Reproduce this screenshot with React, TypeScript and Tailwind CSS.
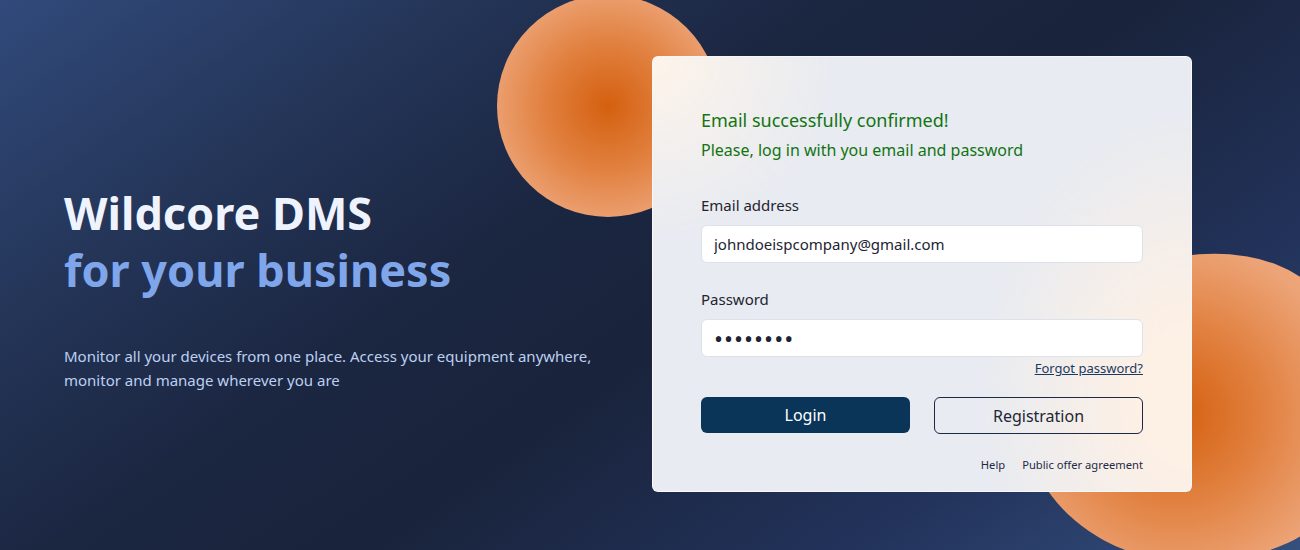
import { useState } from "react";

const FONT = "font-['Segoe_UI','Noto_Sans',sans-serif]";

function Field({
  label,
  type,
  value,
  className = "",
}: {
  label: string;
  type: string;
  value: string;
  className?: string;
}) {
  return (
    <div className="flex flex-col">
      <label className="mb-[10px] text-[15px] leading-5 text-[#1f2430]">{label}</label>
      <input
        type={type}
        defaultValue={value}
        className={`h-[38px] rounded-md border border-[#dde2ea] bg-white px-3 text-[#1d2433] outline-none ${className}`}
      />
    </div>
  );
}

export default function App() {
  const [email] = useState("johndoeispcompany@gmail.com");

  return (
    <div
      className={`relative h-[550px] w-full overflow-hidden bg-[linear-gradient(145deg,#314a7b_0%,#243558_22%,#1b2641_40%,#19233b_55%,#22325a_78%,#34507f_100%)] ${FONT}`}
    >
      {/* decorative blobs */}
      <div className="absolute left-[497px] top-[-5px] h-[222px] w-[222px] rounded-full bg-[radial-gradient(circle,#d4600f_0%,#e1803f_40%,#eca274_75%,#f2b690_100%)]" />
      <div className="absolute left-[1026px] top-[255px] h-[315px] w-[335px] rotate-[-24deg] rounded-[44%_56%_40%_60%/45%_40%_60%_55%] bg-[radial-gradient(circle_at_45%_48%,#d4600f_0%,#e1803f_35%,#eca274_68%,#f2b690_100%)]" />

      <div className="relative flex h-full items-center px-16">
        <div className="w-[588px] shrink-0 pt-[26px]">
          <h1 className="text-[45px] font-bold leading-[57px] text-[#eef3fd]">
            Wildcore DMS
            <br />
            <span className="text-[#7fa6ea]">for your business</span>
          </h1>
          <p className="mt-[46px] max-w-[545px] text-[15px] leading-6 text-[#bcd0f2]">
            Monitor all your devices from one place. Access your equipment anywhere, monitor and manage wherever you are
          </p>
        </div>

        <div className="mb-[2px] w-[540px] shrink-0 rounded-md border border-white/60 bg-[radial-gradient(circle_at_0%_0%,#fef4ea_0%,rgba(254,244,234,0)_180px),radial-gradient(ellipse_210px_280px_at_100%_78%,#fdf0e5_0%,#fdf0e5_25%,rgba(253,240,229,0)_100%),linear-gradient(#e8ebf1,#e8ebf1)] px-12 pb-[18px] pt-[51px]">
          <p className="text-[18px] leading-6 text-[#127412]">Email successfully confirmed!</p>
          <p className="mt-[6px] text-[16px] leading-6 text-[#127412]">Please, log in with you email and password</p>

          <div className="mt-[33px] flex flex-col gap-[26px]">
            <Field label="Email address" type="email" value={email} className="text-[15px]" />
            <Field label="Password" type="password" value="12345678" className="text-[24px] tracking-[1px]" />
          </div>

          <div className="mt-px flex justify-end">
            <a href="#" className="text-[13px] leading-5 text-[#1b3a62] underline">
              Forgot password?
            </a>
          </div>

          <div className="mt-[19px] flex justify-between">
            <button className="h-9 w-[209px] rounded-md bg-[#0b3558] text-[16px] text-white">Login</button>
            <button className="h-[37px] w-[209px] rounded-md border border-[#1c2a45] text-[16px] text-[#1f2735]">
              Registration
            </button>
          </div>

          <div className="mt-[23px] flex justify-end gap-[17px] text-[11.2px] leading-4 text-[#1f2a45]">
            <a href="#">Help</a>
            <a href="#">Public offer agreement</a>
          </div>
        </div>
      </div>
    </div>
  );
}
